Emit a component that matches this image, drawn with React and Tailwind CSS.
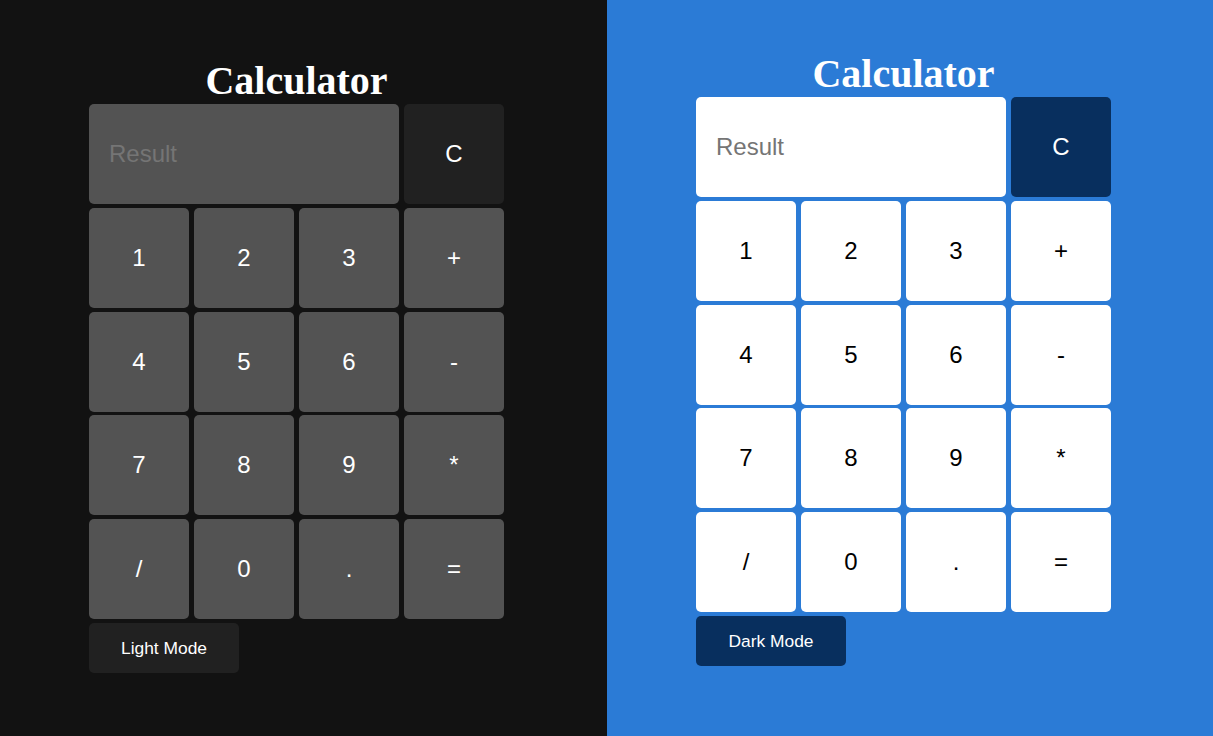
import React from "react";

const keys = ["1", "2", "3", "+", "4", "5", "6", "-", "7", "8", "9", "*", "/", "0", ".", "="];

const Calculator = ({ dark, top }) => {
  const panel = dark ? "bg-[#121212]" : "bg-[#2b7bd6]";
  const key = dark ? "bg-[#535353] text-white" : "bg-white text-black";
  const input = dark ? "bg-[#535353]" : "bg-white";
  const accent = dark ? "bg-[#212121]" : "bg-[#082f5e]";

  return (
    <div className={`${panel} h-full flex flex-col pl-[89px] ${top}`}>
      {/* Title */}
      <h1 className="w-[415px] text-center text-white font-bold text-[40px] leading-[46px] font-['Liberation_Serif',serif]">
        Calculator
      </h1>

      {/* Keypad */}
      <div className="grid grid-cols-[100px_100px_100px_100px] gap-x-[5px] gap-y-[3.75px] font-['Liberation_Sans',Arial,sans-serif]">
        <div className={`col-span-3 h-[100px] rounded-[5px] ${input} flex items-center pl-5 text-[24px] text-[#757575]`}>
          Result
        </div>
        <div className={`h-[100px] rounded-[5px] ${accent} text-white text-[24px] flex items-center justify-center`}>
          C
        </div>
        {keys.map((k) => (
          <div
            key={k}
            className={`h-[100px] rounded-[5px] ${key} text-[24px] flex items-center justify-center`}
          >
            {k}
          </div>
        ))}
      </div>

      {/* Theme toggle */}
      <div
        className={`mt-[4px] w-[150px] h-[50px] rounded-[5px] ${accent} text-white text-[17.4px] flex items-center justify-center font-['Liberation_Sans',Arial,sans-serif]`}
      >
        {dark ? "Light Mode" : "Dark Mode"}
      </div>
    </div>
  );
};

export default function App() {
  return (
    <div className="flex w-[1213px] h-[736px] overflow-hidden">
      <div className="w-[607px] h-full">
        <Calculator dark top="pt-[58px]" />
      </div>
      <div className="flex-1 h-full">
        <Calculator top="pt-[51px]" />
      </div>
    </div>
  );
}
